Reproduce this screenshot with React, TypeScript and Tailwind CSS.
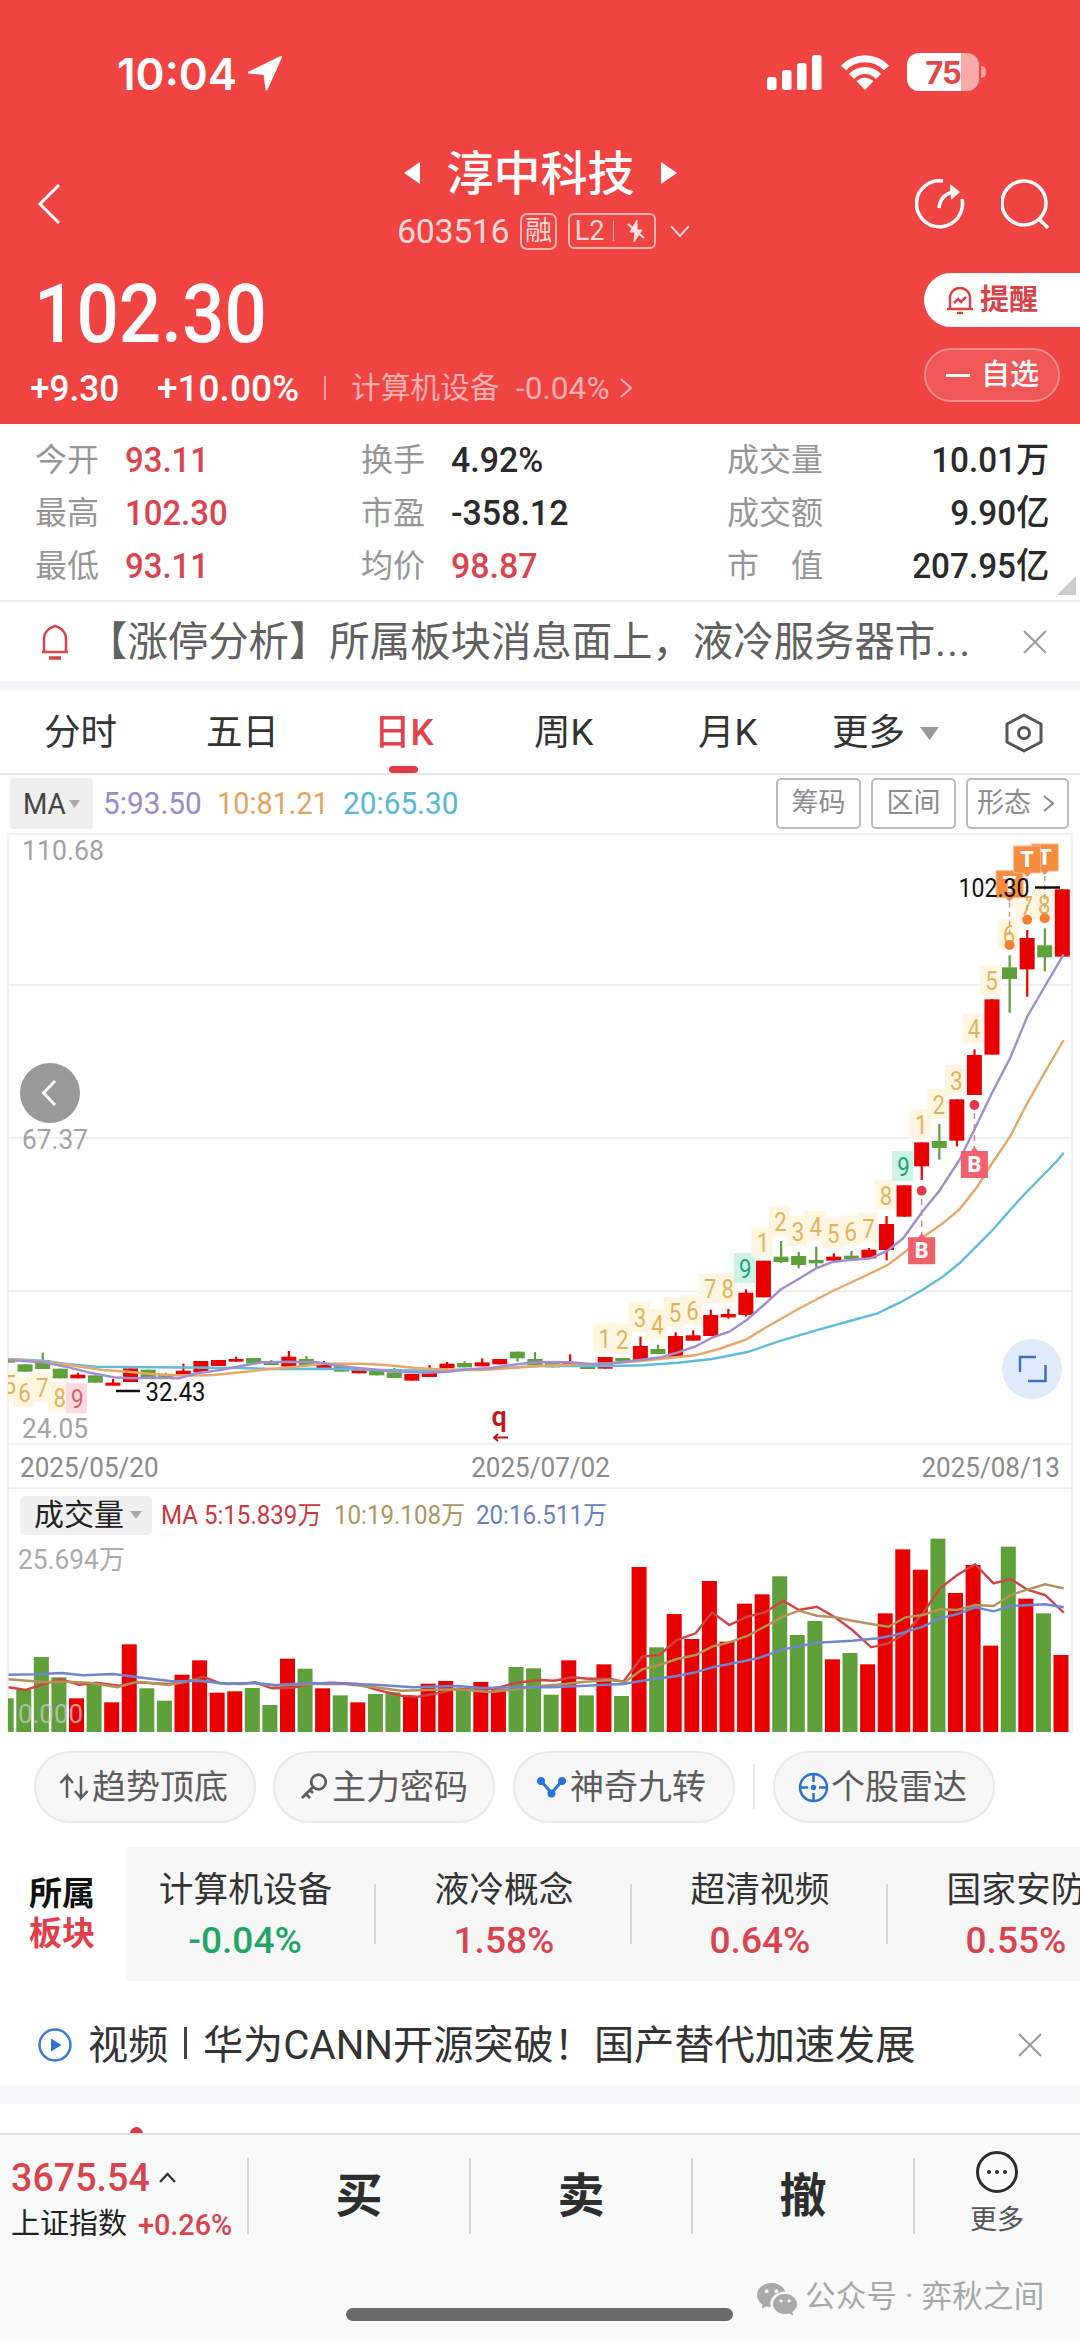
import React from 'react';
import { BsWechat } from 'react-icons/bs';

const RED = '#e80000';
const GREEN = '#5fa03a';

/* Chart units: 2.904 per pixel across, 3 per pixel down, measured from each panel's origin. */
const ux = (x: number) => x / 2.904;
const volumeX = (k: number) => 1061 - 17.58 * (60 - k);
const cx = (k: number) => 1062.3 - 17.58 * (60 - k);
const line = (pts: number[], top: number) => {
  const out: string[] = [];
  for (let i = 0; i < pts.length; i += 2) out.push(`${ux(pts[i]).toFixed(1)},${(top + pts[i + 1] / 3).toFixed(1)}`);
  return out.join(' ');
};

type Candle = [string, number, number, number?, number?];
const CANDLES: Candle[] = [
  ['g', 595, 608], ['g', 613, 635], ['g', 600, 627, 578], ['g', 626, 655], ['r', 644, 655, 638], ['g', 646, 668],
  ['r', 668, 677, 657], ['r', 625, 666], ['g', 629, 657], ['g', 645, 655, 638], ['r', 632, 643, 611], ['r', 603, 637],
  ['r', 600, 618], ['r', 597, 605, 590], ['g', 594, 611], ['g', 604, 615, 600], ['r', 590, 620, 573], ['g', 597, 617, 588],
  ['r', 611, 624, 603], ['g', 617, 635], ['r', 630, 640], ['g', 632, 646], ['g', 637, 654, 624], ['r', 642, 662],
  ['r', 636, 651, 615], ['r', 611, 625, 606], ['g', 609, 622, 604], ['r', 607, 619, 595], ['r', 597, 613],
  ['g', 575, 595, 575, 605], ['g', 597, 615, 576], ['g', 605, 622], ['r', 608, 613, 583], ['g', 620, 627],
  ['r', 591, 626], ['g', 594, 605], ['r', 558, 601, 530], ['g', 567, 582, 554], ['r', 528, 590, 517],
  ['r', 526, 542, 511], ['r', 465, 528, 449], ['r', 462, 472, 447, 476], ['r', 398, 465, 388, 470], ['r', 302, 412],
  ['g', 290, 306, 243, 309], ['g', 288, 315, 276, 325], ['g', 300, 310, 260, 325], ['r', 290, 302, 280, 305],
  ['g', 287, 297, 273, 300], ['r', 269, 295, 264, 298], ['r', 192, 270, 168, 301], ['r', 76, 170], ['r', -53, 19, -53, 60],
  ['g', -57, -36, -108, -1], ['r', -182, -58, -182, -41], ['r', -315, -195, -332], ['r', -482, -316],
  ['g', -578, -543, -614, -442], ['r', -666, -572, -690, -490], ['g', -644, -608, -695, -566], ['r', -812, -610],
];

const VOLUMES = [
  655, 630, 531, 592, 655, 612, 667, 493, 625, 662, 584, 541, 638, 634, 624, 675, 536, 566, 625, 646, 667, 642, 637, 650,
  611, 603, 628, 606, 628, 561, 565, 644, 541, 646, 553, 648, 261, 502, 402, 477, 303, 485, 371, 343, 289, 465, 423, 538,
  519, 553, 400, 208, 269, 176, 339, 255, 497, 200, 356, 400, 525,
];
const VOLUME_COLORS = 'ggggrgrrggrrrrggrgrgrggrrrgrrgggrgrgrgrrrrrrgggrgrrrrgrrrgrgr';

const MA5 = [25, 600, 124, 607, 200, 622, 260, 638, 330, 652, 380, 655, 450, 653, 520, 655, 570, 640, 640, 630, 700, 618, 760, 607, 840, 605, 920, 607, 1000, 620, 1070, 627, 1150, 635, 1240, 638, 1300, 635, 1360, 628, 1420, 625, 1500, 613, 1568, 606, 1658, 607, 1718, 613, 1778, 610, 1858, 600, 1918, 592, 1968, 577, 2018, 560, 2068, 533, 2118, 515, 2168, 480, 2218, 435, 2268, 388, 2318, 358, 2368, 326, 2418, 306, 2468, 300, 2528, 295, 2578, 272, 2623, 235, 2678, 155, 2728, 92, 2786, 0, 2829, -90, 2878, -195, 2933, -305, 2983, -430, 3028, -510, 3089, -617];
const MA10 = [25, 598, 124, 605, 200, 615, 300, 630, 380, 636, 450, 643, 540, 647, 620, 645, 700, 637, 780, 628, 860, 620, 940, 611, 1050, 611, 1120, 615, 1200, 623, 1300, 630, 1400, 630, 1568, 618, 1688, 613, 1778, 610, 1868, 602, 2018, 586, 2088, 567, 2168, 538, 2228, 500, 2318, 447, 2418, 393, 2518, 345, 2578, 315, 2623, 280, 2678, 233, 2738, 190, 2786, 148, 2838, 80, 2878, 15, 2933, -70, 2983, -170, 3038, -270, 3089, -360];
const MA20 = [25, 597, 124, 602, 200, 613, 280, 620, 450, 622, 700, 624, 800, 627, 950, 626, 1100, 630, 1250, 632, 1400, 627, 1568, 618, 1688, 618, 1778, 618, 1868, 616, 1968, 608, 2068, 597, 2168, 577, 2268, 542, 2368, 512, 2468, 483, 2548, 460, 2618, 425, 2678, 390, 2738, 350, 2786, 310, 2878, 215, 2968, 110, 3072, 0, 3089, -22];

const VMA5 = [25, 622, 75, 630, 124, 613, 175, 598, 230, 614, 280, 608, 345, 617, 395, 607, 490, 612, 540, 606, 590, 590, 640, 610, 700, 612, 740, 607, 790, 625, 850, 623, 900, 612, 960, 608, 1040, 612, 1090, 628, 1165, 647, 1215, 650, 1270, 640, 1330, 626, 1400, 630, 1450, 622, 1500, 608, 1568, 600, 1610, 602, 1660, 592, 1710, 596, 1770, 596, 1810, 605, 1865, 530, 1915, 525, 1965, 480, 2020, 460, 2068, 397, 2118, 435, 2170, 410, 2220, 398, 2274, 362, 2320, 390, 2372, 380, 2425, 412, 2475, 450, 2530, 502, 2580, 490, 2630, 460, 2680, 400, 2730, 325, 2780, 285, 2832, 253, 2885, 310, 2935, 297, 2985, 330, 3035, 345, 3089, 398];
const VMA10 = [25, 598, 124, 606, 200, 605, 260, 608, 340, 622, 400, 605, 490, 615, 560, 600, 640, 610, 740, 610, 800, 617, 900, 612, 1000, 612, 1090, 622, 1165, 632, 1240, 630, 1330, 628, 1420, 636, 1500, 628, 1568, 618, 1640, 612, 1700, 605, 1770, 600, 1815, 606, 1865, 568, 1915, 555, 1965, 537, 2020, 525, 2068, 500, 2118, 487, 2170, 468, 2220, 440, 2274, 410, 2320, 392, 2372, 407, 2425, 412, 2475, 422, 2530, 432, 2580, 440, 2630, 412, 2680, 405, 2730, 388, 2780, 390, 2832, 375, 2885, 378, 2935, 345, 2985, 328, 3035, 313, 3089, 325];
const VMA20 = [25, 584, 100, 583, 180, 579, 240, 586, 330, 582, 400, 592, 500, 604, 590, 602, 660, 612, 740, 609, 800, 615, 900, 609, 1000, 611, 1090, 614, 1200, 622, 1330, 618, 1400, 624, 1500, 622, 1600, 622, 1700, 617, 1810, 612, 1865, 602, 1965, 588, 2020, 577, 2068, 562, 2118, 552, 2200, 535, 2274, 508, 2372, 488, 2475, 482, 2550, 475, 2600, 465, 2680, 440, 2730, 415, 2780, 402, 2832, 382, 2885, 394, 2935, 378, 3035, 373, 3089, 382];

/* Nine-turn counters: [candle index, digit, baseline] */
const COUNTS: [number, string, number][] = [
  [0.15, '5', 703], [1, '6', 725], [2, '7', 712], [3, '8', 740], [4, '9', 745],
  [34, '1', 563], [35, '2', 567], [36, '3', 500], [37, '4', 522], [38, '5', 486], [39, '6', 480], [40, '7', 415],
  [41, '8', 415], [42, '9', 354], [43, '1', 275], [44, '2', 213], [45, '3', 243], [46, '4', 228], [47, '5', 248],
  [48, '6', 242], [49, '7', 233], [50, '8', 134], [51, '9', 48], [52, '1', -78], [53, '2', -138], [54, '3', -210],
  [55, '4', -365], [56, '5', -509], [57, '6', -648], [58, '7', -735], [59, '8', -737],
];

function PriceChart() {
  const Y = (y: number) => 1160 + y / 3;
  return (
    <svg className="block h-[656px] w-[1080px]" viewBox="0 833 1080 656" fontFamily="Roboto, sans-serif">
      <defs>
        <clipPath id="plot"><rect x="8" y="833" width="1064" height="611" /></clipPath>
      </defs>
      <g stroke="#ececec" strokeWidth="1.5">
        <path d="M8 834H1072M8 985H1072M8 1138H1072M8 1291H1072M8 1444H1072M8 1488.3H1072M8 833V1489M1072 833V1489" fill="none" />
      </g>
      <g clipPath="url(#plot)">
        {COUNTS.map(([k, d, b], i) => (
          <rect key={i} x={cx(k) - 12} y={Y(b) - 25} width="21" height="30" fill={d === '9' ? (k < 10 ? '#fadadd' : '#cdf3e4') : '#fff6e2'} />
        ))}
        {COUNTS.map(([k, d, b], i) => (
          <text key={i} x={cx(k) - 0.5} y={Y(b)} fontSize="25" textAnchor="middle" textLength="12.5" lengthAdjust="spacingAndGlyphs"
            fill={d === '9' ? (k < 10 ? '#d9606c' : '#1da57a') : '#dfb45c'}>{d}</text>
        ))}
        {CANDLES.map(([c, t, b, wt, wb], k) => {
          const col = c === 'r' ? RED : GREEN;
          return (
            <g key={k} fill={col}>
              <rect x={cx(k) - 7.5} y={Y(t)} width="15" height={(b - t) / 3} />
              <rect x={cx(k) - 1} y={Y(wt ?? t)} width="2.2" height={((wb ?? b) - (wt ?? t)) / 3} />
            </g>
          );
        })}
        <polyline points={line(MA20, 1160)} fill="none" stroke="#62bbdc" strokeWidth="2.4" />
        <polyline points={line(MA10, 1160)} fill="none" stroke="#e5a868" strokeWidth="2.4" />
        <polyline points={line(MA5, 1160)} fill="none" stroke="#a08fd0" strokeWidth="2.4" />
      </g>
      {([[52, 232, 92], [55, -27, -165]] as const).map(([k, top, dot]) => (
        <g key={k}>
          <circle cx={cx(k)} cy={Y(dot)} r="4.9" fill="#e2394a" />
          <path d={`M${cx(k)} ${Y(dot) + 8}V${Y(top) - 3}`} stroke="#c88" strokeWidth="1.5" strokeDasharray="6 5" />
          <path d={`M${cx(k) - 13.5} ${Y(top)}h10l3.5 -4l3.5 4h10v27h-27z`} fill="#f0616c" />
          <text x={cx(k)} y={Y(top) + 21} fontSize="21.500" fontWeight="800" fill="#fff" textAnchor="middle">B</text>
        </g>
      ))}
      {([[57, -868, -645], [59, -948, -725], [58, -942, -721]] as const).map(([k, top, dot]) => (
        <g key={k}>
          <path d={`M${cx(k)} ${Y(top) + 32}V${Y(dot) - 6}`} stroke="#cba070" strokeWidth="1.5" strokeDasharray="5 4" />
          <path d={`M${cx(k) - 13.5} ${Y(top)}h27v27h-10l-3.5 4l-3.5 -4h-10z`} fill="#f68c40" stroke="#ffb98a" strokeWidth="1" />
          <text x={cx(k)} y={Y(top) + 21} fontSize="22" fontWeight="800" fill="#fff" textAnchor="middle">T</text>
          <circle cx={cx(k)} cy={Y(dot)} r="5" fill="#f3802f" />
        </g>
      ))}
      <text x="958.500" y="897" fontSize="25.500" fill="#111" textLength="71" lengthAdjust="spacingAndGlyphs">102.30</text>
      <path d="M1035 887.5H1060M116 1391H140" stroke="#111" strokeWidth="2.5" />
      <text x="145.500" y="1401" fontSize="25" fill="#111" textLength="60" lengthAdjust="spacingAndGlyphs">32.43</text>
      <g fontSize="27" fill="#a3a3a3">
        <text x="22" y="860" textLength="82" lengthAdjust="spacingAndGlyphs">110.68</text>
        <text x="22" y="1149" textLength="66" lengthAdjust="spacingAndGlyphs">67.37</text>
        <text x="22" y="1438" textLength="66" lengthAdjust="spacingAndGlyphs">24.05</text>
      </g>
      <text x="491.500" y="1426" fontSize="27" fontWeight="600" fill="#c4161c">q</text>
      <path d="M508 1437.5H494M498 1434L494 1437.5L498 1441" stroke="#c4161c" strokeWidth="2" fill="none" />
      <circle cx="50" cy="1093" r="30" fill="#999" />
      <path d="M55 1081L43.5 1093L55 1105" fill="none" stroke="#fff" strokeWidth="3" />
      <circle cx="1032" cy="1369" r="30" fill="#dfebfa" />
      <path d="M1020 1372V1357H1036M1045.5 1365V1381H1028" fill="none" stroke="#3b6fc0" strokeWidth="2.5" />
    </svg>
  );
}

function VolumeChart() {
  return (
    <svg className="block h-[198px] w-[1080px]" viewBox="0 1538 1080 198" fontFamily="Roboto, 'Noto Sans CJK SC', sans-serif">
      <defs>
        <clipPath id="vol"><rect x="8" y="1538" width="1064" height="194" /></clipPath>
      </defs>
      <path d="M8 1538V1732M1072 1538V1732" stroke="#ececec" strokeWidth="1.5" />
      <g clipPath="url(#vol)">
        {VOLUMES.map((v, k) => (
          <rect key={k} x={volumeX(k) - 7.5} y={1480 + v / 3} width="15" height={252 - v / 3} fill={VOLUME_COLORS[k] === 'r' ? RED : GREEN} />
        ))}
        <polyline points={line(VMA5, 1480)} fill="none" stroke="#cf4444" strokeWidth="2.4" />
        <polyline points={line(VMA10, 1480)} fill="none" stroke="#b5925a" strokeWidth="2.4" />
        <polyline points={line(VMA20, 1480)} fill="none" stroke="#6f86cc" strokeWidth="2.4" />
      </g>
      <text x="18" y="1569" fontSize="27" fill="#ababab" textLength="107" lengthAdjust="spacingAndGlyphs">25.694万</text>
      <text x="18" y="1723" fontSize="26" fill="#c8c8c8" fillOpacity="0.75" textLength="65" lengthAdjust="spacingAndGlyphs">0.000</text>
    </svg>
  );
}

/* Numeric text, set to a given horizontal scale. */
const N = ({ children, className = 'scale-x-[0.95]' }: { children: React.ReactNode; className?: string }) => (
  <span className={`inline-block ${className}`}>{children}</span>
);

const Close = () => (
  <svg className="size-[24px]" viewBox="0 0 24 24" fill="none" stroke="#999" strokeWidth="2"><path d="M1 1L23 23M23 1L1 23" /></svg>
);

const STATS = [
  ['今开', '93.11', '换手', '4.92%', '成交量', '10.01万'],
  ['最高', '102.30', '市盈', '-358.12', '成交额', '9.90亿'],
  ['最低', '93.11', '均价', '98.87', '市　值', '207.95亿'],
];

const SECTORS = [
  ['计算机设备', '-0.04%'],
  ['液冷概念', '1.58%'],
  ['超清视频', '0.64%'],
  ['国家安防', '0.55%'],
];

function Header() {
  return (
    <header className="h-[424px] bg-[#f04443] text-white">
      <div className="flex h-[140px] items-start pt-[48px] pl-[117px]">
        <span className="inline-block w-[130px] font-[Inter] text-[44px] leading-[52px] font-semibold">10:04</span>
        <svg className="mt-[8px] size-[35px]" viewBox="0 0 35 35" fill="#fff" stroke="#fff" strokeWidth="2" strokeLinejoin="round"><path d="M34 1L2 16.5L17.5 18L19.5 33.5z" /></svg>
        <svg className="mt-[7px] ml-[485px] h-[35px] w-[55px]" viewBox="0 0 55 35" fill="#fff">
          <rect x="0" y="22" width="9.500" height="13" rx="2.500" /><rect x="15" y="15" width="9.500" height="20" rx="2.500" /><rect x="30" y="8" width="9.500" height="27" rx="2.500" /><rect x="45" y="0" width="9.500" height="35" rx="2.500" />
        </svg>
        <svg className="mt-[6px] ml-[18px] h-[36px] w-[50px]" viewBox="0 0 50 36" fill="none" stroke="#fff" strokeWidth="7">
          <path d="M3.5 14C15 1.5 35 1.5 46.5 14" /><path d="M11.5 22.5C19 14.5 31 14.5 38.500 22.5" /><path d="M25 36L16.5 27Q25 20 33.5 27z" fill="#fff" stroke="none" />
        </svg>
        <div className="mt-[5px] ml-[17px] flex h-[38px] w-[72px] items-center justify-center overflow-hidden rounded-[12px] bg-gradient-to-r from-white from-75% to-[#f9a9a8] to-75% font-[Inter] text-[31px] font-bold tracking-[-1px] text-[#e0484a]">75</div>
        <div className="mt-[18px] ml-[2px] h-[12px] w-[5px] rounded-r-full bg-[#f9a09f]" />
      </div>
      <div className="grid h-[116px] grid-cols-[390px_300px_227px_84px_79px]">
        <svg className="mt-[44px] ml-[37px] h-[40px] w-[24px]" viewBox="0 0 24 40" fill="none" stroke="#fff" strokeWidth="3"><path d="M22 1L3 20L22 39" /></svg>
        <div className="-mt-[2px]">
          <div className="flex h-[70px] items-center justify-between pr-[13px] pl-[14px]">
            <svg className="h-[22px] w-[17px]" viewBox="0 0 17 22" fill="#fff"><path d="M16 0V22L0 11z" /></svg>
            <span className="text-[47px] leading-none font-medium">淳中科技</span>
            <svg className="h-[22px] w-[17px]" viewBox="0 0 17 22" fill="#fff"><path d="M1 0V22L17 11z" /></svg>
          </div>
          <div className="flex h-[46px] items-center pl-[7px] text-[#ffd8d7]">
            <span className="w-[124px] text-[34px] tracking-[-0.4px]">603516</span>
            <span className="flex h-[37px] w-[37px] items-center justify-center rounded-[7px] border-2 border-[#fbb3b2] text-[27px] leading-none">融</span>
            <span className="ml-[11px] flex h-[36px] w-[89px] items-center rounded-[6px] border-2 border-[#fbb3b2] pl-[5px] text-[27px] leading-none">
              L2
              <span className="ml-[8px] h-[20px] w-px bg-[#fbb3b2]" />
              <svg className="ml-[12px] h-[22px] w-[20px]" viewBox="0 0 20 22" fill="#ffe3e2" stroke="#ffe3e2"><path d="M11 0L4 12H9L8 22L16 10H11z" /><path d="M2 4L18 18" strokeWidth="2.200" /></svg>
            </span>
            <svg className="ml-[14px] h-[12px] w-[20px]" viewBox="0 0 20 12" fill="none" stroke="#ffd3d2" strokeWidth="2"><path d="M1 1L10 11L19 1" /></svg>
          </div>
        </div>
        <div />
        <svg className="mt-[37px] -ml-[2px] size-[52px]" viewBox="0 0 52 52" fill="none" stroke="#fff" strokeWidth="3.500"><path d="M28 4A23 23 0 1 0 47 22" /><path d="M24 31C25 22 29 16 40 15" /><path d="M35 7L45 15L36 23z" fill="#fff" stroke="none" /></svg>
        <svg className="mt-[38px] size-[52px]" viewBox="0 0 52 52" fill="none" stroke="#fff" strokeWidth="3.500"><circle cx="23" cy="25" r="22" /><path d="M38 41L47 50" /></svg>
      </div>
      <div className="flex h-[168px] justify-between">
        <div className="pl-[30px]">
          <div className="h-[104px] pt-[17px] pl-[4px] text-[82px] leading-none font-medium"><N className="origin-left scale-x-[0.91]">102.30</N></div>
          <div className="flex h-[56px] items-center">
            <span className="w-[127px] text-[37px] font-medium"><N className="origin-left scale-x-[0.95]">+9.30</N></span>
            <span className="w-[167px] text-[37px] font-medium">+10.00%</span>
            <span className="h-[24px] w-[2px] bg-[#f79a99]" />
            <span className="ml-[25px] text-[29.700px] text-[#fbb1b0]">计算机设备</span>
            <span className="ml-[17px] w-[104px] text-[31px] text-[#fbb1b0]"><N className="origin-left scale-x-[1.02]">-0.04%</N></span>
            <svg className="h-[20px] w-[12px]" viewBox="0 0 12 20" fill="none" stroke="#fbb1b0" strokeWidth="2"><path d="M1 1L11 10L1 19" /></svg>
          </div>
        </div>
        <div className="w-[156px] pt-[17px]">
          <div className="flex h-[54px] items-center gap-[4px] rounded-l-full bg-white pl-[20px] text-[#d8434a]">
            <svg className="size-[32px]" viewBox="0 0 32 32" fill="none" stroke="#d8434a" strokeWidth="2.500"><path d="M3 25H29M6 25V14A10 10 0 0 1 26 14V25M13 29H19" /><path d="M10 19L14 15L17 18L22 13" /></svg>
            <span className="text-[29px] leading-none font-bold">提醒</span>
          </div>
          <div className="mt-[21px] flex h-[54px] w-[136px] items-center rounded-full border-2 border-[#f68c8b] bg-[#f05857] pl-[20px]">
            <span className="h-[3px] w-[24px] bg-white" />
            <span className="ml-[11px] text-[29px] leading-none font-medium">自选</span>
          </div>
        </div>
      </div>
    </header>
  );
}

export default function App() {
  return (
    <div className="h-[2341px] w-[1080px] overflow-hidden bg-white font-['Roboto','Noto_Sans_CJK_SC',sans-serif] leading-none whitespace-nowrap text-[#222]">
      <Header />

      <section className="relative h-[178px] border-b-2 border-[#ededed] pt-[9px]">
        {STATS.map((r, i) => (
          <div key={i} className="grid h-[53px] grid-cols-[90px_236px_90px_276px_120px_202px] items-center pl-[35px] text-[32px]">
            <span className="text-[#969696]">{r[0]}</span>
            <span className="pt-px text-[35px] font-medium text-[#d9444f]"><N className="origin-left scale-x-[0.94]">{r[1]}</N></span>
            <span className="text-[#969696]">{r[2]}</span>
            <span className={`pt-px text-[35px] font-medium ${i === 2 ? 'text-[#d9444f]' : 'text-[#2a2a2a]'}`}><N className="origin-left scale-x-[0.97]">{r[3]}</N></span>
            <span className="text-[#969696]">{r[4]}</span>
            <span className="pt-px text-right text-[35px] font-medium text-[#2a2a2a]"><N className="origin-right scale-x-[0.95]">{r[5]}</N></span>
          </div>
        ))}
        <svg className="absolute right-[4px] bottom-[5px] size-[19px]" viewBox="0 0 19 19" fill="#ccc"><path d="M19 0V19H0z" /></svg>
      </section>

      <section className="flex h-[79px] items-center">
        <svg className="ml-[40px] h-[36px] w-[30px]" viewBox="0 0 30 36" fill="none" stroke="#d8434a" strokeWidth="2.500"><path d="M2 28H28M4 28V15C4 7 11 3 15 2C19 3 26 7 26 15V28" /><path d="M9 34H21" strokeWidth="3.500" /></svg>
        <span className="ml-[17px] w-[936px] pt-[4px] text-[40.400px] text-[#606060]">【涨停分析】所属板块消息面上，液冷服务器市<span className="tracking-[1.500px]">...</span></span>
        <Close />
      </section>
      <div className="h-[10px] bg-[#f4f6f7]" />

      <nav className="flex h-[84px] items-center border-b-2 border-[#e6e6e6] pt-[2px] text-[36.500px] text-[#333]">
        <span className="ml-[44px] w-[162px]">分时</span>
        <span className="w-[168px]">五日</span>
        <span className="relative flex h-full w-[160px] items-center font-medium text-[#e0434d]">日K
          <span className="absolute bottom-0 left-[15px] h-[7px] w-[29px] rounded-full bg-[#e0394a]" />
        </span>
        <span className="w-[164px]">周K</span>
        <span className="w-[134px]">月K</span>
        <span>更多</span>
        <svg className="ml-[15px] h-[13px] w-[19px]" viewBox="0 0 19 13" fill="#999"><path d="M0 0H19L9.5 13z" /></svg>
        <svg className="ml-[66px] h-[40px] w-[38px]" viewBox="0 0 38 40" fill="none" stroke="#555" strokeWidth="3" strokeLinejoin="round"><path d="M19 2L36 11V29L19 38L2 29V11z" /><circle cx="19" cy="20" r="5.500" /></svg>
      </nav>

      <div className="flex h-[57px] items-center pr-[10px] pl-[10px] text-[31px]">
        <span className="flex h-[51px] w-[83px] items-center rounded-[4px] bg-[#efefef] pl-[13px] text-[30px] text-[#444]"><span className="w-[46px]"><N className="origin-left scale-x-[0.93]">MA</N></span>
          <svg className="h-[8px] w-[11px]" viewBox="0 0 11 8" fill="#aaa"><path d="M0 0H11L5.5 8z" /></svg>
        </span>
        <span className="ml-[10px] w-[114px] text-[#9a8bcb]"><N className="origin-left scale-x-[0.96]">5:93.50</N></span>
        <span className="w-[126px] text-[#e2a462]"><N className="origin-left scale-x-[0.93]">10:81.21</N></span>
        <span className="w-[433px] text-[#56b8d5]"><N className="origin-left scale-x-[0.96]">20:65.30</N></span>
        <span className="flex h-[51px] w-[85px] items-center justify-center rounded-[5px] border-2 border-[#bbb] text-[27px] text-[#8c8c8c]">筹码</span>
        <span className="ml-[10px] flex h-[51px] w-[85px] items-center justify-center rounded-[5px] border-2 border-[#bbb] text-[27px] text-[#8c8c8c]">区间</span>
        <span className="ml-[10px] flex h-[51px] w-[103px] items-center gap-[12px] rounded-[5px] border-2 border-[#bbb] pl-[9px] text-[27px] text-[#8c8c8c]">形态
          <svg className="h-[17px] w-[11px]" viewBox="0 0 11 17" fill="none" stroke="#888" strokeWidth="2"><path d="M1 1L10 8.5L1 16" /></svg>
        </span>
      </div>

      <div className="mt-px -mb-[45px] h-[656px]"><PriceChart /></div>
      <div className="flex h-[45px] items-center justify-between px-[20px] pt-[3px] text-[28px] text-[#8a8a8a]">
        <N className="origin-left scale-x-[0.93]">2025/05/20</N>
        <N className="scale-x-[0.93]">2025/07/02</N>
        <N className="origin-right scale-x-[0.93]">2025/08/13</N>
      </div>

      <div className="mx-[7px] flex h-[49px] items-center border-x-2 border-[#efefef] pt-[3px] text-[25.500px]">
        <span className="ml-[11px] flex h-[39px] w-[132px] items-center rounded-[5px] bg-[#f0f0f0] pl-[14px] text-[30px] text-[#222]">成交量
          <svg className="ml-[6px] h-[8px] w-[12px]" viewBox="0 0 12 8" fill="#aaa"><path d="M0 0H12L6 8z" /></svg>
        </span>
        <span className="ml-[9px] w-[173px] pt-[2px] text-[#cb3640]"><N className="origin-left scale-x-[0.945]">MA 5:15.839万</N></span>
        <span className="w-[142px] pt-[2px] text-[#a9985f]"><N className="origin-left scale-x-[0.945]">10:19.108万</N></span>
        <span className="pt-[2px] text-[#6c80bf]"><N className="origin-left scale-x-[0.945]">20:16.511万</N></span>
      </div>
      <VolumeChart />

      <div className="flex h-[102px] items-start pt-[15px] pl-[34px] text-[34px] text-[#5c5c5c]">
        <span className="flex h-[72px] w-[222px] items-center rounded-full border-2 border-[#e9e9e9] bg-[#f7f7f7] pl-[22px]">
          <svg className="h-[28px] w-[34px]" viewBox="0 0 34 28" fill="none" stroke="#5c5c5c" strokeWidth="2.500"><path d="M9 25V3L2.5 10M9 3L15 10" /><path d="M23 3V25L29.5 18M23 25L17 18" /></svg>
          趋势顶底
        </span>
        <span className="ml-[17px] flex h-[72px] w-[222px] items-center rounded-full border-2 border-[#e9e9e9] bg-[#f7f7f7] pl-[25px]">
          <svg className="mr-[3px] h-[28px] w-[29px]" viewBox="0 0 29 28" fill="none" stroke="#5c5c5c" strokeWidth="2.700"><circle cx="18.500" cy="9" r="7.300" /><path d="M13 14L2 25M5 20L10 25M9 16L13 20" /></svg>
          主力密码
        </span>
        <span className="ml-[18px] flex h-[72px] w-[222px] items-center rounded-full border-2 border-[#e9e9e9] bg-[#f7f7f7] pl-[21px]">
          <svg className="mr-[3px] h-[22px] w-[31px]" viewBox="0 0 31 22" fill="#2b72d8" stroke="#2b72d8" strokeWidth="3"><path d="M5 5L15.5 17L26 5" fill="none" /><circle cx="5" cy="5" r="2.500" /><circle cx="26" cy="5" r="2.500" /><circle cx="15.500" cy="17.500" r="2.500" /></svg>
          神奇九转
        </span>
        <span className="mt-[13px] ml-[18px] h-[45px] w-[2px] bg-[#e9e9e9]" />
        <span className="ml-[18px] flex h-[72px] w-[222px] items-center rounded-full border-2 border-[#e9e9e9] bg-[#f7f7f7] pl-[23px]">
          <svg className="mr-[2px] size-[31px]" viewBox="0 0 31 31" fill="none" stroke="#2b72d8" strokeWidth="2.500"><circle cx="15.500" cy="15.500" r="13.500" /><path d="M15.5 2V10M15.5 21V29M2 15.5H10M21 15.5H29" /><circle cx="15.500" cy="15.500" r="1.500" fill="#2b72d8" /></svg>
          个股雷达
        </span>
      </div>

      <section className="mt-[9px] flex h-[134px]">
        <div className="w-[126px] pt-[27px] pl-[29px] text-[33px] leading-[40px] font-bold text-[#111]">所属<br /><span className="text-[#e0404c]">板块</span></div>
        <div className="flex w-[954px] overflow-hidden bg-[#f7f7f7]">
          {SECTORS.map(([name, pct], i) => (
            <div key={name} className={`relative shrink-0 pt-[26px] text-center ${i === 0 ? 'w-[250px] pr-[11px]' : 'w-[256px]'}`}>
              <div className="text-[34.700px] text-[#333]">{name}</div>
              <div className={`mt-[15px] text-[36px] font-medium ${i === 0 ? 'text-[#1fa666]' : 'text-[#d9444f]'}`}><N className="scale-x-[1.03]">{pct}</N></div>
              {i < 3 && <span className="absolute top-[37px] right-0 h-[60px] w-[2px] bg-[#d8d8d8]" />}
            </div>
          ))}
        </div>
      </section>

      <section className="flex h-[104px] items-center pt-[24px]">
        <svg className="ml-[38px] size-[34px]" viewBox="0 0 34 34" fill="none" stroke="#3b7bd2" strokeWidth="2.500"><circle cx="17" cy="17" r="15.500" /><path d="M13 10.5L23.5 17L13 23.5z" fill="#2b72d8" stroke="none" /></svg>
        <span className="ml-[16px] w-[930px] pt-[2px] text-[40.200px] text-[#333]">视频<span className="mx-[16px] inline-block h-[32px] w-[2.500px] bg-[#444]" />华为CANN开源突破！国产替代加速发展</span>
        <Close />
      </section>
      <div className="h-[19px] bg-[#f4f6f8]" />
      <div className="h-[29px] overflow-hidden pt-[23px] pl-[130px]"><div className="size-[13px] rounded-full bg-[#dc3a44]" /></div>

      <footer className="h-[209px] border-t-2 border-[#dedede] bg-[#f8faf9]">
        <div className="flex h-[121px] items-center">
          <div className="w-[247px] pt-[12px] pl-[11px]">
            <div className="flex h-[46px] items-center">
              <span className="w-[148px] text-[39px] font-medium text-[#d9444f]"><N className="origin-left scale-x-[0.965]">3675.54</N></span>
              <svg className="-mt-[2px] h-[11px] w-[17px]" viewBox="0 0 17 11" fill="none" stroke="#333" strokeWidth="2.300"><path d="M1 10L8.5 2L16 10" /></svg>
            </div>
            <div className="flex h-[46px] items-center">
              <span className="w-[127px] text-[29px]">上证指数</span>
              <span className="text-[30px] font-medium text-[#d9444f]"><N className="origin-left scale-x-[0.96]">+0.26%</N></span>
            </div>
          </div>
          {['买', '卖', '撤'].map((t) => (
            <div key={t} className="flex h-[76px] w-[222px] items-center justify-center border-l-2 border-[#d4d4d4] text-[47px] font-bold text-[#2d2f2e]">{t}</div>
          ))}
          <div className="flex h-[76px] w-[166px] flex-col items-center border-l-2 border-[#d4d4d4] text-[27px] text-[#555]">
            <svg className="-mt-[8px] size-[44px] shrink-0" viewBox="0 0 44 44" fill="none" stroke="#2d2d2d" strokeWidth="3"><circle cx="22" cy="22" r="19.500" /><g fill="#2d2d2d" stroke="none"><circle cx="14" cy="22" r="2" /><circle cx="22" cy="22" r="2" /><circle cx="30" cy="22" r="2" /></g></svg>
            <span className="mt-[13px]">更多</span>
          </div>
        </div>
        <div className="flex h-[80px] items-start pl-[346px]">
          <div className="mt-[52px] h-[13px] w-[387px] rounded-full bg-[#666a68]" />
          <BsWechat className="mt-[22px] ml-[24px] size-[40px] text-[#a8aaa9]" />
          <span className="mt-[26px] ml-[8px] text-[30.500px] tracking-[0.3px] text-[#a6a8a7]">公众号 · 弈秋之间</span>
        </div>
      </footer>
    </div>
  );
}
